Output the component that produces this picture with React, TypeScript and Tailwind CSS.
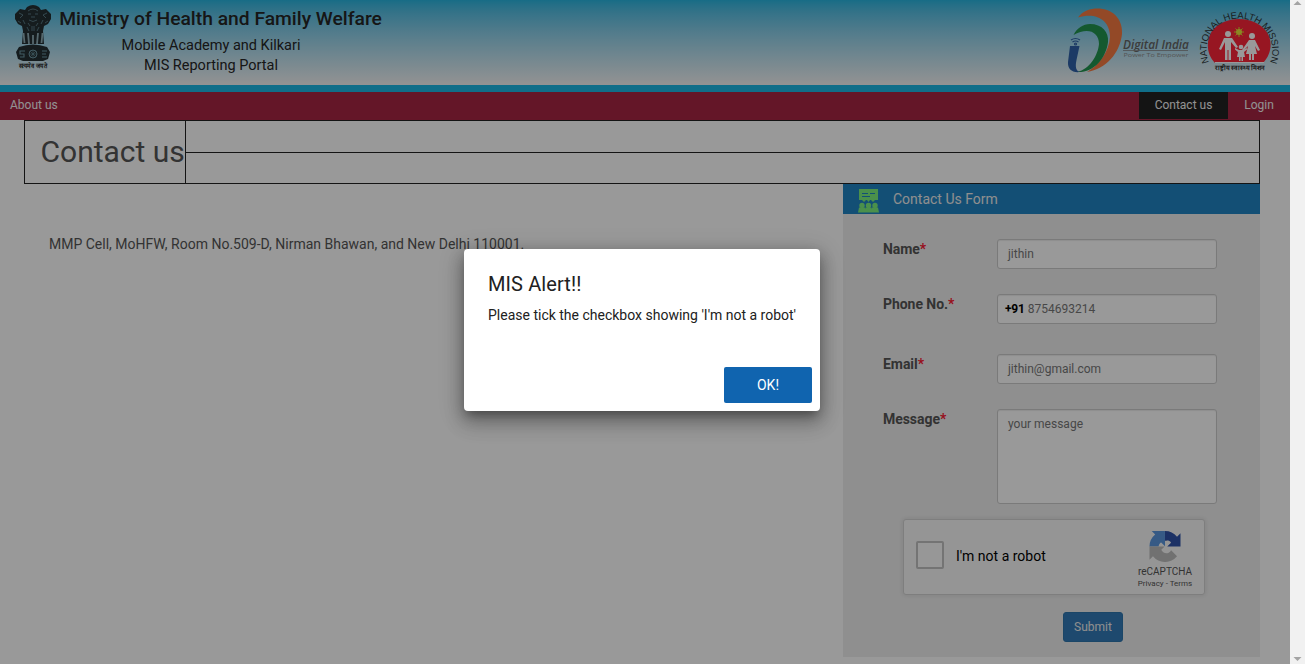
import React from "react";

const FONT = "font-[Roboto,'Liberation_Sans',sans-serif]";

function Emblem() {
  return (
    <svg viewBox="0 0 40 66" className="h-[66px] w-10 shrink-0">
      <g fill="#232f33">
        <path d="M14 3q6-4 12 0l2 3 5-1 5 5v5l-3 5-4 2-1 5 1 13H9l1-13-1-5-4-2-3-5v-5l5-5 5 1z" />
        <path d="M6 43q14-5 28 0l3 5-2 7-5 2H10l-5-2-2-7z" />
      </g>
      <g fill="none" stroke="#6d97a3" strokeWidth="0.7">
        <path d="M15 7q5-4 10 0M15 10h3m4 0h3M18 13h4M16 16q4 3 8 0M15 19l2 3m8-3-2 3M6 9l4 2-3 3m27-5-4 2 3 3M5 17l3 2m27-2-3 2M10 16l2 4m18-4-2 4M14 23l2 4m10-4-2 4M19 22v5m2-5v5" />
        <circle cx="20" cy="50" r="4" strokeWidth="1" />
        <path strokeWidth="0.600" d="M20 46v8M16 50h8M17 47l6 6M23 47l-6 6" />
        <path strokeWidth="1.100" d="M12 47H7v3h4v3H7m22-6h5m-5 3h4m-4 3h5" />
      </g>
      <path fill="none" stroke="#8fadb6" strokeWidth="1.800" d="M10.500 29l1 10M15 29l1 11M20 31v9M25 29l-1 11M29.500 29l-1 10" />
      <text x="20" y="64" textAnchor="middle" textLength="29" lengthAdjust="spacingAndGlyphs" fontSize="6.500" fontWeight="700" fill="#222">सत्यमेव जयते</text>
    </svg>
  );
}

function DigitalIndia() {
  return (
    <svg viewBox="0 0 126 70" className="h-[70px] w-[126px] shrink-0">
      <path fill="#f57a42" d="M11 12.500C16 5 25 3 33 3.500 48 5 56 16 55 29 53 48 39 64 20 67 32 60 42 47 43 32 43 15 29 7 11 12.500z" />
      <path fill="#22954f" d="M6.500 30C10 23 16 19 23 19 35 19 42 27 41 37 39 54 26 68 10 67 23 64 31 50 32 39 32 26 20 22 6.500 30z" />
      <path fill="#3062a8" d="M3 41h9.500L9.500 55C8 62 9 66 13 67 5 68 .5 64 1 57z" />
      <g fill="none" stroke="#3062a8" strokeWidth="1.200">
        <path d="M4 35q4.500-3 9 0M5.500 37q3-2 6 0" />
        <circle cx="8.500" cy="39" r="1" />
      </g>
      <text x="56" y="43.500" fontSize="12" fontWeight="600" fontStyle="italic" fill="#646464" textLength="66" lengthAdjust="spacingAndGlyphs" className="font-['Open_Sans',sans-serif]">Digital India</text>
      <path stroke="#858585" strokeWidth="0.800" d="M56 45.500h65" />
      <text x="56.500" y="52" fontSize="6" fill="#8c8c8c" textLength="65" lengthAdjust="spacingAndGlyphs" className="font-['Open_Sans',sans-serif]">Power To Empower</text>
    </svg>
  );
}

function HealthMission() {
  return (
    <svg viewBox="0 0 84 68" className="h-[68px] w-[84px] shrink-0 overflow-visible">
      <path fill="#fc2639" d="M16 58C7 49 7 35 13 26c12-16 42-16 54 0 7 9 6 23-3 32z" />
      <path id="mission-arc" fill="none" d="M10 57.500C2 38 14 13.500 40 13.500S79 38 71 57.500" />
      <text fontSize="9.500" fill="#2b3538" className="font-['Liberation_Sans',sans-serif]">
        <textPath href="#mission-arc" textLength="127" lengthAdjust="spacing">NATIONAL HEALTH MISSION</textPath>
      </text>
      <path stroke="#d5d52e" strokeWidth="1" d="M40 22v10M35 27h10M36.500 23.500l7 7M43.500 23.500l-7 7" />
      <circle cx="40" cy="27" r="3" fill="#e8e23a" />
      <g fill="#fff">
        <circle cx="29" cy="29" r="3" />
        <path d="M25 33h8l6 9-2 1-5-6v18h-2.500V45h-1v10H26V37l-4 8-2-1z" />
        <circle cx="53" cy="31" r="3" />
        <path d="M50 35h6l5 10-2 1-3-5 2 8h-3v6h-2v-6h-1v6h-2v-6h-3l2-8-5 5-1-1z" />
        <circle cx="42" cy="42" r="2.300" />
        <path d="M40 45h4l4-2v1.500l-3 2.500 1 5h-2v4h-1.500v-4h-1v4H40v-4h-2l1-5-3-2.500V43z" />
        <path d="M16 57h49v1H16z" />
      </g>
      <text x="41" y="64.500" textAnchor="middle" textLength="50" lengthAdjust="spacingAndGlyphs" fontSize="6.500" fontWeight="700" fill="#2b2b2b">राष्ट्रीय स्वास्थ्य मिशन</text>
    </svg>
  );
}

function Captcha() {
  return (
    <div className="ml-[60px] mt-[15px] flex h-[76px] w-[302px] rounded-[3px] border border-[#d3d3d3] bg-[#f9f9f9] shadow-[0_0_4px_1px_rgba(0,0,0,0.08)]">
      <div className="ml-3 mt-[21px] size-7 rounded-[2px] border-2 border-[#c1c1c1] bg-[#fcfcfc]" />
      <span className="ml-3 mt-[26px] text-sm leading-5 text-black">I'm not a robot</span>
      <div className="ml-auto mr-[11px] mt-[10px] flex w-[56px] flex-col items-center whitespace-nowrap text-[#555]">
        <svg viewBox="-1 -2 66 66" className="h-8 w-8">
          <path fill="#2f52a8" d="M64 31.950a29.300 29.300 0 0 0-.03-1.370V4.690l-7.160 7.160A31.950 31.950 0 0 0 31.900 0v20.400c2-.8 4.200-1.200 6.500-.8 2.500.7 4.600 1.900 6.100 4.500l-7.900 7.900z" />
          <path fill="#5a96de" d="M31.860 0H4.600l7.160 7.160A31.960 31.960 0 0 0 0 32h18.700c1.100-4 2.200-6.200 4.700-8l.7-.4 8 8z" />
          <path fill="#bcbcbc" d="M0 32v27.230l7.160-7.160A31.950 31.950 0 0 0 56.800 52.300l-12.200-12.400c-1.200 2.200-2.900 3.900-5 5-3.200 1.700-7.500 1.300-10.400-.6-2.100-1.500-3.900-3.500-4.900-5.400l7-6.900z" />
        </svg>
        <span className="mt-[3px] text-[10px] leading-[14px]">reCAPTCHA</span>
        <span className="text-[8px] leading-[10px]">Privacy - Terms</span>
      </div>
    </div>
  );
}

function Field({ label, value, prefix, tall, className }: {
  label: string; value: string; prefix?: string; tall?: boolean; className: string;
}) {
  return (
    <div className={"flex items-start " + className}>
      <label className="w-[114px] text-sm font-bold leading-5 tracking-[-0.05px] text-[#555]">
        {label}<span className="text-[#fc1832]">*</span>
      </label>
      <div className={"flex w-[220px] gap-[3px] rounded-[3px] border border-[#ccc] bg-white text-xs leading-[28px] text-[#777] shadow-[inset_0_1px_1px_rgba(0,0,0,0.075)] " + (prefix ? "pl-[7px] " : "pl-[10px] ") + (tall ? "h-[95px]" : "h-[30px]")}>
        {prefix && <b className="tracking-[-0.2px] text-black">{prefix}</b>}
        <span>{value}</span>
      </div>
    </div>
  );
}

export default function App() {
  return (
    <div className={"flex h-[664px] w-[1305px] overflow-hidden bg-white " + FONT}>
      <div className="relative w-[1290px] shrink-0">
        <header className="flex h-[92px] items-start border-b-[7px] border-[#1cb8e4] bg-linear-to-b from-[#27b5df] to-[#f5f5f5] bg-origin-padding">
          <div className="ml-[13px] mt-1"><Emblem /></div>
          <div className="ml-[6px] flex w-[323px] flex-col items-center whitespace-nowrap text-[#252525]">
            <h1 className="mt-[7px] text-[19.250px] font-medium leading-6">Ministry of Health and Family Welfare</h1>
            <p className="-ml-[19px] mt-1 text-[14.500px] leading-[21px]">Mobile Academy and Kilkari</p>
            <p className="-ml-[19px] text-[14.500px] leading-5">MIS Reporting Portal</p>
          </div>
          <div className="ml-auto mr-[7px] flex items-start gap-[6px]">
            <div className="mt-[5px]"><DigitalIndia /></div>
            <div className="mt-[5px]"><HealthMission /></div>
          </div>
        </header>

        <nav className="flex h-7 bg-[#a72544] text-xs leading-[27px] text-[#f3f3f3]">
          <a className="ml-[10px]">About us</a>
          <a className="ml-auto h-[27px] w-[89px] bg-[#222] text-center">Contact us</a>
          <a className="w-[62px] text-center">Login</a>
        </nav>

        <main className="ml-6 w-[1236px]">
          <div className="flex h-16 border border-[#222]">
            <h2 className="w-[161px] border-r border-[#222] pl-[15.500px] text-[30px] leading-[62px] text-[#555] whitespace-nowrap">Contact us</h2>
            <div className="flex flex-1 flex-col">
              <div className="h-8 border-b border-[#222]" />
            </div>
          </div>
          <div className="flex">
            <p className="w-[819px] pl-[25px] pt-[50px] text-sm leading-5 text-[#555]">MMP Cell, MoHFW, Room No.509-D, Nirman Bhawan, and New Delhi 110001.</p>
            <section className="h-[473px] w-[417px] bg-[#efefef]">
              <div className="flex h-[30px] items-center bg-[#2184c3] pl-[15px] text-sm text-[#eee]">
                <svg viewBox="0 0 21 24" className="mt-[3px] h-6 w-[21px]">
                  <g fill="#7ef07d">
                    <path d="M1 0h19v11h-3l-2 2-2-2h-1l-1.500 2L9 11H8l-2 2-2-2H1z" />
                    <circle cx="4" cy="16.500" r="2.700" />
                    <circle cx="10.500" cy="16.500" r="2.700" />
                    <circle cx="17" cy="16.500" r="2.700" />
                    <path d="M0 23.500l1-5h6l.500 5zM6.500 23.500l1-5h6l1 5zM13.500 23.500l.500-5h6l1 5z" />
                  </g>
                  <path stroke="#2184c3" d="M4 4.500h6m2 0h5M4 7.500h8" />
                </svg>
                <span className="ml-[14px]">Contact Us Form</span>
              </div>
              <div className="pl-10 pt-[25px]">
                <Field label="Name" value="jithin" className="h-[55px]" />
                <Field label="Phone No." value="8754693214" prefix="+91" className="h-[60px]" />
                <Field label="Email" value="jithin@gmail.com" className="h-[55px]" />
                <Field label="Message" value="your message" tall className="h-[95px]" />
              </div>
              <Captcha />
              <button className="ml-[220px] mt-[17px] block h-[30px] w-[60px] rounded-[3px] border border-[#2e75ac] bg-[#337ab7] text-xs text-[#eee]">Submit</button>
            </section>
          </div>
        </main>

        <div className="absolute inset-0 bg-black/40" />
        <div role="dialog" className="absolute left-[464px] top-[249px] flex h-[162px] w-[356px] flex-col rounded bg-white shadow-[0_7px_8px_-4px_rgba(0,0,0,0.2),0_13px_19px_2px_rgba(0,0,0,0.14),0_5px_24px_4px_rgba(0,0,0,0.12),0_5px_15px_rgba(0,0,0,0.25)]">
          <h2 className="ml-6 mt-[21px] text-xl leading-7 tracking-[0.1px] text-[#212121]">MIS Alert!!</h2>
          <p className="ml-6 mt-[7px] whitespace-nowrap text-sm leading-5 text-[#212121]">Please tick the checkbox showing 'I'm not a robot'</p>
          <button className="mb-2 mr-2 mt-auto h-9 w-[88px] self-end rounded-[2px] bg-[#1064af] text-sm text-white">OK!</button>
        </div>
      </div>
      <div className="flex w-[15px] flex-col items-center justify-between bg-[#f1f1f1]">
        <svg viewBox="0 0 15 8" className="h-2 w-[15px]"><path fill="#a3a3a3" d="M3.500 5l4-4 4 4z" /></svg>
        <svg viewBox="0 0 15 10" className="h-[10px] w-[15px]"><path fill="#a3a3a3" d="M3.500 3l4 4 4-4z" /></svg>
      </div>
    </div>
  );
}
